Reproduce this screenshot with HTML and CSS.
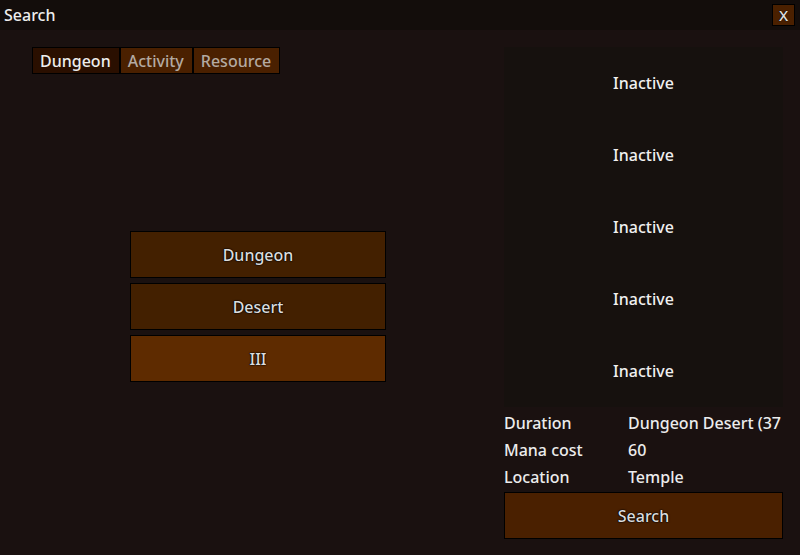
FILE: index.html
```html
<!DOCTYPE html>
<html>
<head>
<meta charset="utf-8">
<link rel="stylesheet" href="styles.css">
</head>
<body>
<div class="window">
  <div class="titlebar">
    <span class="title">Search</span>
    <button class="close">X</button>
  </div>
  <div class="content">
    <div class="left">
      <div class="tabs">
        <div class="tab active">Dungeon</div>
        <div class="tab">Activity</div>
        <div class="tab">Resource</div>
      </div>
      <div class="choices">
        <div class="choice">Dungeon</div>
        <div class="choice">Desert</div>
        <div class="choice selected">III</div>
      </div>
    </div>
    <div class="right">
      <div class="slots">
        <div class="slot">Inactive</div>
        <div class="slot">Inactive</div>
        <div class="slot">Inactive</div>
        <div class="slot">Inactive</div>
        <div class="slot">Inactive</div>
      </div>
      <div class="info">
        <div class="row"><span class="label">Duration</span><span class="value">Dungeon Desert (37</span></div>
        <div class="row"><span class="label">Mana cost</span><span class="value">60</span></div>
        <div class="row"><span class="label">Location</span><span class="value">Temple</span></div>
      </div>
      <div class="search">Search</div>
    </div>
  </div>
</div>
</body>
</html>
```
FILE: styles.css
```css
html, body {
  margin: 0;
  padding: 0;
}
* {
  box-sizing: border-box;
}
body {
  width: 800px;
  height: 555px;
  overflow: hidden;
  background: #1a1110;
  font-family: "Noto Sans", "Open Sans", sans-serif;
  font-size: 16px;
  font-weight: 500;
  color: #ececec;
}
.window {
  display: flex;
  flex-direction: column;
  height: 555px;
}
.titlebar {
  height: 30px;
  flex: none;
  background: #130d0b;
  display: flex;
  align-items: center;
  justify-content: space-between;
  padding: 0 5px 0 4px;
}
.title {
  color: #eeeeee;
  line-height: 30px;
}
.close {
  width: 23px;
  height: 22px;
  padding: 0;
  background: #4a2000;
  border: 1px solid #000;
  color: #e0e0e0;
  font-family: inherit;
  font-weight: 500;
  font-size: 15px;
  line-height: 20px;
  text-shadow: 0 0 1px #000, 0 0 1px #000;
}
.content {
  flex: 1;
  display: flex;
  padding: 17px 17px 16px 32px;
  gap: 20px;
}
.left {
  width: 452px;
  display: flex;
  flex-direction: column;
}
.tabs {
  display: flex;
  gap: 0;
  height: 27px;
}
.tab {
  background: #4a2000;
  border: 1px solid #000;
  color: #b4aaa2;
  padding: 0 8px 0 7px;
  line-height: 27px;
}
.tab.active {
  background: #2a0f00;
  color: #ededed;
}
.choices {
  flex: 1;
  display: flex;
  flex-direction: column;
  justify-content: center;
  align-items: center;
  gap: 5px;
}
.choice {
  width: 256px;
  height: 47px;
  line-height: 47px;
  text-align: center;
  background: #432000;
  border: 1px solid #000;
  color: #dcdcdc;
  text-shadow: 0 0 1px #000, 0 0 1px #000, 0 0 2px #000;
}
.choice.selected {
  background: #5e2b00;
}
.right {
  width: 279px;
  display: flex;
  flex-direction: column;
}
.slots {
  background: #16110e;
  display: flex;
  flex-direction: column;
}
.slot {
  height: 72px;
  display: flex;
  align-items: center;
  justify-content: center;
  color: #f0f0f0;
}
.info {
  margin-top: 2px;
  display: flex;
  flex-direction: column;
}
.row {
  height: 27px;
  display: flex;
  align-items: center;
  white-space: nowrap;
}
.label {
  width: 124px;
  flex: none;
}
.search {
  margin-top: 2px;
  height: 47px;
  line-height: 47px;
  text-align: center;
  background: #4a2000;
  border: 1px solid #000;
  color: #dcdcdc;
  text-shadow: 0 0 1px #000, 0 0 1px #000, 0 0 2px #000;
}
```
